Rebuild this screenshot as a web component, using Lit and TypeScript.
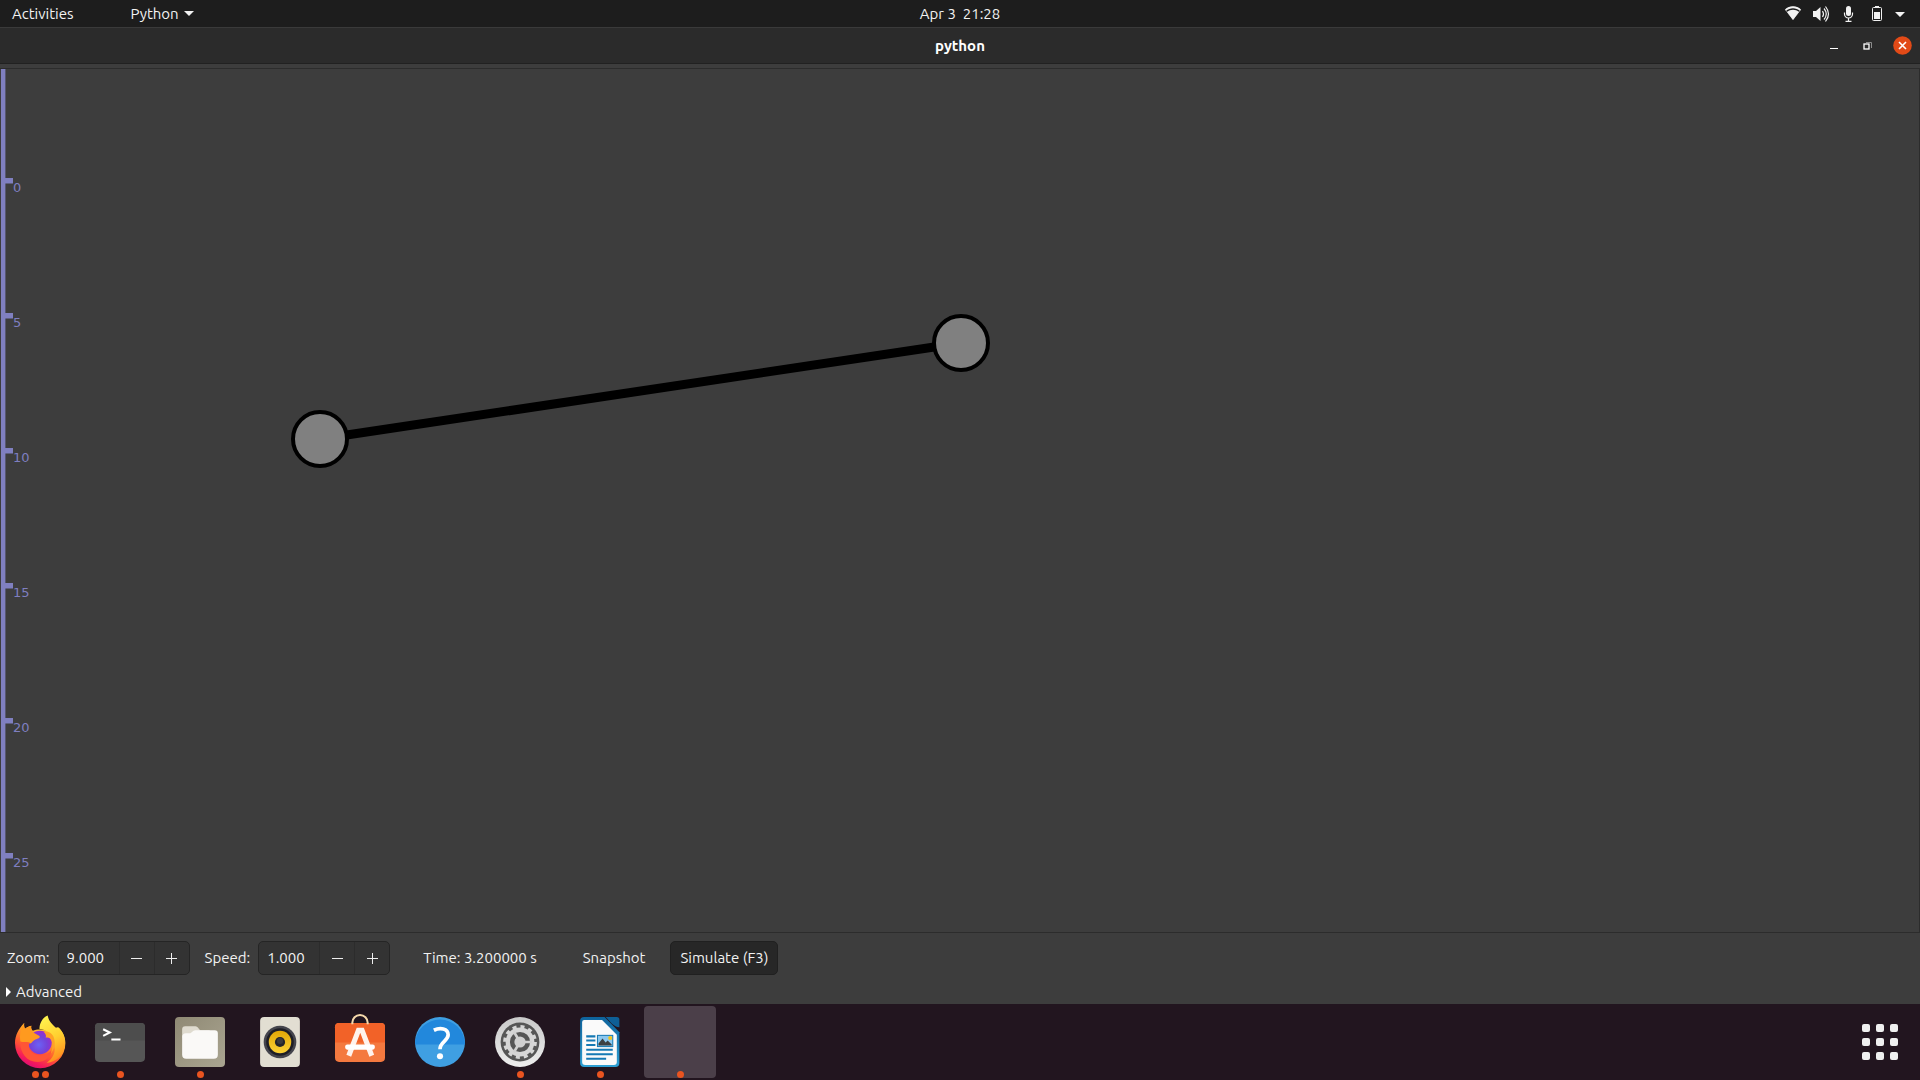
import { LitElement, html, svg, css } from "lit";
import { customElement, property } from "lit/decorators.js";

const UNIT = 27;
const ORIGIN = 113;
const TICKS = [0, 5, 10, 15, 20, 25];

const firefox = svg`
  <defs>
    <linearGradient id="ffBody" x1="0.8" y1="0.1" x2="0.3" y2="1">
      <stop offset="0" stop-color="#ffe23a"/><stop offset="0.3" stop-color="#ffa52a"/>
      <stop offset="0.6" stop-color="#ff5a30"/><stop offset="0.85" stop-color="#f5195c"/>
      <stop offset="1" stop-color="#d60d78"/>
    </linearGradient>
    <linearGradient id="ffFlame" x1="0.3" y1="0" x2="0.6" y2="1">
      <stop offset="0" stop-color="#fff34f"/><stop offset="0.5" stop-color="#ffd030"/><stop offset="1" stop-color="#ff8a1e"/>
    </linearGradient>
    <radialGradient id="ffGlobe" cx="0.45" cy="0.6" r="0.6">
      <stop offset="0" stop-color="#6b62f5"/><stop offset="0.6" stop-color="#7542d8"/><stop offset="1" stop-color="#9b2bcf"/>
    </radialGradient>
  </defs>
  <path fill="url(#ffBody)" d="M9 6c-.3 2.500 0 4 .8 5.500C11.500 10 13.500 9 16 8.500c-.5 2 0 3.500 1.500 5C21 12 26 12 30 13l12-3c4 3 7.400 8.500 7.400 15.500A24.600 24.600 0 0 1 0 25.500C0 18 4 11 9 6z"/>
  <path fill="url(#ffFlame)" d="M32-1.500c1 5.500 4 8 7.500 11.500 1.300 1.300 2.400 2.400 3 3.700.3-1.500.2-2.700-.1-4 4.500 4.500 7 10 6.600 17C48.500 37 41 44 31 45c7-5 9-11 7.500-17C37.500 21 34 15.500 29 13c-1.500-.8-3.500-1-5-1 0-6 3-11.500 8-13.500z"/>
  <circle cx="24.500" cy="25" r="11.500" fill="url(#ffGlobe)"/>
  <path fill="#ff9a1f" d="M9 6c-.3 2.500 0 4 .8 5.500C11.500 10 13.500 9 16 8.500c-.5 2 0 4 1.500 6.500l6.500 3.500c1 2-1.500 2.500-4 3.500-2.500 1-3 3-5 4-3-.8-6 0-9 1.500C4 20 4.500 12 9 6z"/>
  <path fill="#ff5536" d="M5 24c3 1 6 0 9.500 1-2.500 4-.5 8 3.500 10.500 6 3.500 13 2.500 18-3-1 7-7 11.500-14 11.500C12 44 5 36 5 24z"/>
  <path fill="#ffa326" d="M28 14.500c4-1.500 9 1.500 10 5.500 2 6 1 11-3 16 2.500-6 2-12 0-14-1-2-3-2-5-2 1-1 0-4-2-5.500z"/>`;

const terminal = svg`
  <rect x="0" y="6" width="49" height="38" rx="4" fill="#565656"/>
  <path d="M0 23V10a4 4 0 0 1 4-4h41a4 4 0 0 1 4 4v13z" fill="#4d4d4d"/>
  <path d="M8 12l6.500 3.200L8 18.500M16 22h9" fill="none" stroke="#fff" stroke-width="2"/>`;

const files = svg`
  <defs><linearGradient id="fl" x1="0" y1="0" x2="1" y2="1"><stop offset="0" stop-color="#8f8974"/><stop offset="1" stop-color="#aaa591"/></linearGradient></defs>
  <rect width="49" height="49" rx="4" fill="url(#fl)"/>
  <path d="M7 20v-8a3 3 0 0 1 3-3h10c3 0 3 4 6 4h8v7z" fill="#dfdbcf"/>
  <path d="M11 16h3c3 0 3-3 6-3h19a3 3 0 0 1 3 3v21a4 4 0 0 1-4 4H11a4 4 0 0 1-4-4V20a4 4 0 0 1 4-4z" fill="#faf9f7"/>`;

const rhythmbox = svg`
  <defs><linearGradient id="rb" x1="0" y1="0" x2="0" y2="1"><stop offset="0" stop-color="#e3a806"/><stop offset="1" stop-color="#fbd135"/></linearGradient></defs>
  <rect x="5" width="39" height="49" rx="4" fill="#e2ded2"/>
  <circle cx="24.500" cy="24.500" r="16" fill="#45454d"/>
  <circle cx="24.500" cy="24.500" r="13.500" fill="#1e1e26"/>
  <circle cx="24.500" cy="24.500" r="11" fill="url(#rb)"/>
  <circle cx="24.500" cy="24.500" r="5" fill="#25252a"/>
  <circle cx="24.500" cy="23.500" r="3" fill="#3a3a3e"/>`;

const software = svg`
  <rect x="0" y="6" width="49" height="38" rx="4" fill="#f4793f"/>
  <path d="M0 25V10a4 4 0 0 1 4-4h41a4 4 0 0 1 4 4v15z" fill="#f26228"/>
  <path d="M17 7V5.500a7.500 7.500 0 0 1 15 0V7" fill="none" stroke="#f6d9ab" stroke-width="2"/>
  <path d="M13.500 38L23 13h3.500L36 38" fill="none" stroke="#fff2ec" stroke-width="5"/>
  <rect x="10" y="27" width="29" height="5" rx="2" fill="#fff"/>`;

const help = svg`
  <circle cx="24.500" cy="24.500" r="24.500" fill="#3f9fe2"/>
  <path d="M0 27a24.500 24.500 0 1 1 49 0z" fill="#2288dc"/>
  <path d="M18.500 13c6-3 14-2 14 4.500 0 6-8 7-8 14" fill="none" stroke="#fff" stroke-width="3.600"/>
  <circle cx="24.500" cy="38.500" r="3" fill="#fff"/>`;

const settings = svg`
  <defs><linearGradient id="st" x1="0" y1="0" x2="0" y2="1"><stop offset="0" stop-color="#c9c9c9"/><stop offset="1" stop-color="#eeeeee"/></linearGradient></defs>
  <circle cx="24.500" cy="24.500" r="24.500" fill="url(#st)"/>
  <circle cx="24.500" cy="24.500" r="19" fill="#565656"/>
  <circle cx="24.500" cy="24.500" r="14.800" fill="none" stroke="#d6d6d6" stroke-width="3.500" stroke-dasharray="3.900 3.850"/>
  <circle cx="24.500" cy="24.500" r="12" fill="none" stroke="#d6d6d6" stroke-width="4.200"/>
  <circle cx="24.500" cy="24.500" r="5.500" fill="#d0d0d0"/>
  <path d="M24.500 24.500H36M24.500 24.500L18.500 14.500M24.500 24.500L18.500 34.500" stroke="#d0d0d0" stroke-width="2.600"/>`;

const writer = svg`
  <defs><linearGradient id="wr" x1="0" y1="0" x2="0" y2="1"><stop offset="0" stop-color="#0e639c"/><stop offset="1" stop-color="#2ea0d4"/></linearGradient></defs>
  <path d="M9 0h20L43.500 15v30a4 4 0 0 1-4 4H9a4 4 0 0 1-4-4V4a4 4 0 0 1 4-4z" fill="url(#wr)"/>
  <path d="M9 3h17.500L41 17.500V44a3 3 0 0 1-3 3H10a3 3 0 0 1-3-3V5a2 2 0 0 1 2-2z" fill="#fafafa"/>
  <path d="M30 0h11a2.500 2.500 0 0 1 2.500 2.500V10C38 10 34 4 30 0z" fill="#0e5f96"/>
  <path d="M11 19h9M11 23h9M11 27.500h9M11 32h26M11 36.500h26M11 41h19.500" stroke="#1579b4" stroke-width="2"/>
  <rect x="22" y="18" width="15" height="11" fill="#8cc8ee" stroke="#1579b4"/>
  <path d="M23 28v-2l4-5 3 4 2-2 4 4v1z" fill="#3c4043"/>
  <circle cx="34.500" cy="20.500" r="2" fill="#f4c51b"/>`;

const DOCK = [
  { name: "Firefox", art: firefox, windows: 2 },
  { name: "Terminal", art: terminal, windows: 1 },
  { name: "Files", art: files, windows: 1 },
  { name: "Rhythmbox", art: rhythmbox, windows: 0 },
  { name: "Ubuntu Software", art: software, windows: 0 },
  { name: "Help", art: help, windows: 0 },
  { name: "Settings", art: settings, windows: 1 },
  { name: "LibreOffice Writer", art: writer, windows: 1 },
  { name: "python", art: null, windows: 1, active: true },
];

@customElement("system-bar")
class SystemBar extends LitElement {
  static styles = css`
    :host { display: grid; grid-template-columns: 1fr auto 1fr; align-items: center; height: 27px; background: #1d1d1d; color: #f2f2f2; }
    .side { display: flex; align-items: center; gap: 57px; padding-left: 12px; }
    button { all: unset; display: flex; align-items: center; gap: 5px; }
    .status { display: flex; justify-content: flex-end; padding-right: 14px; }
    .status button { gap: 0; }
    .clock { white-space: pre; }
  `;
  render() {
    return html`
      <nav class="side">
        <button>Activities</button>
        <button>Python
          <svg width="10" height="5" viewBox="0 0 10 5" aria-hidden="true"><path d="M0 0h10L5 5z" fill="#f2f2f2"/></svg>
        </button>
      </nav>
      <button class="clock">Apr 3  21:28</button>
      <div class="status">
        <button aria-label="System menu">
          <svg width="122" height="20" viewBox="0 0 122 20" fill="#f2f2f2">
            <path d="M1.500 5.800C5.500 2 12.500 2 16.500 5.800L9 15.500z" fill="none" stroke="#8a8a8a" stroke-width="1"/>
            <path d="M1 5.500C5.500 1.300 12.500 1.300 17 5.500l-1 1.200C12 3.300 6 3.300 2 6.700z"/>
            <path d="M3 8c3.500-3 8.500-3 12 0l-6 8z"/>
            <path d="M29 7h3l4.500-4v14L32 13h-3z"/>
            <path d="M38.500 7q2 3 0 6M40 4.500q4.500 5.500 0 11M41.500 2.500q6 7.500 0 15" fill="none" stroke="#f2f2f2" stroke-width="1.200"/>
            <rect x="62" y="2" width="5" height="10" rx="2.500"/>
            <path d="M60.500 8.500v1.500a4 4 0 0 0 8 0V8.500M64.500 14v3M61.500 17.300h6" fill="none" stroke="#f2f2f2" stroke-width="1.200"/>
            <path d="M91 2h4v2h-4z"/>
            <rect x="88.500" y="3.500" width="9" height="13" rx="1" fill="none" stroke="#f2f2f2"/>
            <path d="M90 8h6v7h-6zM111 8h10l-5 5z"/>
          </svg>
        </button>
      </div>`;
  }
}

@customElement("title-bar")
class TitleBar extends LitElement {
  static styles = css`
    :host { display: grid; grid-template-columns: 1fr auto 1fr; align-items: center; height: 35px; background: #2b2b2b; border-top: 1px solid #3a3a3a; border-bottom: 1px solid #212121; color: #fff; }
    h1 { margin: 0; font-size: 15px; font-weight: 700; grid-column: 2; }
    .buttons { display: flex; align-items: center; justify-content: flex-end; gap: 16px; padding-right: 8px; }
    button { all: unset; display: flex; }
  `;
  render() {
    return html`
      <h1>python</h1>
      <div class="buttons">
        <button aria-label="Minimize"><svg width="18" height="18"><path d="M5 11.500h8" stroke="#fff"/></svg></button>
        <button aria-label="Restore"><svg width="18" height="18" fill="none"><path d="M7 5.500h5.500V11" stroke="#8c8c8c"/><rect x="5" y="7" width="5" height="5" stroke="#fff" stroke-width="1.300"/></svg></button>
        <button aria-label="Close"><svg width="19" height="19"><circle cx="9.500" cy="9.500" r="9.300" fill="#e24a17"/><path d="M6 6l7 7M13 6l-7 7" stroke="#fff" stroke-width="1.600"/></svg></button>
      </div>`;
  }
}

@customElement("plot-canvas")
class PlotCanvas extends LitElement {
  static styles = css`
    :host { display: block; border: 1px solid #2c2c2c; border-left-width: 0; overflow: hidden; }
    svg { display: block; width: 100%; height: 100%; }
    .label { font: 13px "DejaVu Sans", sans-serif; fill: #7f7fc0; }
  `;
  render() {
    return html`<svg role="img" aria-label="Two connected nodes with a vertical ruler">
      <rect x="1" y="0" width="4.400" height="100%" fill="#8080c0"/>
      ${TICKS.map((t) => svg`
        <rect x="5" y=${ORIGIN + t * UNIT - 4} width="8" height="5.500" fill="#8080c0"/>
        <text class="label" x="13" y=${ORIGIN + t * UNIT + 10}>${t}</text>`)}
      <path d="M320 370L961 274" stroke="#000" stroke-width="9"/>
      <g fill="#808080" stroke="#000" stroke-width="4">
        <circle cx="320" cy="370" r="27"/>
        <circle cx="961" cy="274" r="27"/>
      </g>
    </svg>`;
  }
}

@customElement("spin-field")
class SpinField extends LitElement {
  @property() label = "";
  @property() value = "";
  static styles = css`
    :host { display: flex; align-items: center; gap: 8px; }
    .box { display: flex; box-sizing: border-box; height: 34px; border: 1px solid #252525; border-radius: 5px; background: #333; overflow: hidden; }
    input { all: unset; width: 52px; padding-left: 8px; }
    button { all: unset; display: grid; place-items: center; width: 34px; border-left: 1px solid #2c2c2c; }
    path { stroke: #eee; }
  `;
  render() {
    return html`
      <label for="value">${this.label}</label>
      <div class="box">
        <input id="value" .value=${this.value}>
        <button aria-label="Decrease"><svg width="11" height="11"><path d="M0 5.500h11"/></svg></button>
        <button aria-label="Increase"><svg width="11" height="11"><path d="M0 5.500h11M5.500 0v11"/></svg></button>
      </div>`;
  }
}

@customElement("control-panel")
class ControlPanel extends LitElement {
  static styles = css`
    :host { display: block; padding-bottom: 2px; }
    .row { display: flex; align-items: center; padding: 8px 7px 6px; }
    .fields { display: flex; gap: 15px; }
    .time { margin-left: 33px; }
    button { all: unset; box-sizing: border-box; height: 34px; line-height: 32px; padding: 0 9px; border: 1px solid transparent; border-radius: 5px; }
    .snapshot { margin-left: 36px; }
    .simulate { margin-left: 15px; border-color: #202020; background: #272727; }
    .advanced { all: unset; display: flex; align-items: center; gap: 5px; height: 21px; padding-left: 6px; }
  `;
  render() {
    return html`
      <div class="row">
        <div class="fields">
          <spin-field label="Zoom:" value="9.000"></spin-field>
          <spin-field label="Speed:" value="1.000"></spin-field>
        </div>
        <span class="time">Time: 3.200000 s</span>
        <button class="snapshot">Snapshot</button>
        <button class="simulate">Simulate (F3)</button>
      </div>
      <button class="advanced" aria-expanded="false">
        <svg width="5" height="10" aria-hidden="true"><path d="M0 0l5 5-5 5z" fill="#fff"/></svg>Advanced
      </button>`;
  }
}

@customElement("app-dock")
class AppDock extends LitElement {
  static styles = css`
    :host { display: flex; justify-content: space-between; align-items: center; height: 76px; background: #22151f; }
    .apps { display: flex; gap: 8px; padding-left: 4px; }
    button { all: unset; position: relative; display: grid; place-items: center; width: 72px; height: 72px; border-radius: 4px; }
    .active { background: #4b3f49; }
    .icon { overflow: visible; }
    .dots { position: absolute; bottom: 0; left: 0; right: 0; display: flex; justify-content: center; gap: 3px; }
    .dots i { width: 7px; height: 7px; border-radius: 50%; background: #e95420; }
    .grid { margin-right: 4px; }
  `;
  render() {
    return html`
      <nav class="apps">
        ${DOCK.map((app) => html`
          <button class=${app.active ? "active" : ""} aria-label=${app.name}>
            <svg class="icon" width="50" height="50" viewBox="0 0 49 49">${app.art}</svg>
            <span class="dots">${Array.from({ length: app.windows }, () => html`<i></i>`)}</span>
          </button>`)}
      </nav>
      <button class="grid" aria-label="Show Applications">
        <svg width="36" height="36" fill="#f0f0f0">
          ${[0, 14, 28].map((y) => [0, 14, 28].map((x) => svg`<rect x=${x} y=${y} width="8" height="8" rx="2"/>`))}
        </svg>
      </button>`;
  }
}

@customElement("app-root")
class AppRoot extends LitElement {
  static styles = css`
    :host { display: flex; flex-direction: column; height: 100vh; overflow: hidden; background: #3d3d3d; color: #f2f2f2; font: 15px/20px Ubuntu, "Noto Sans", sans-serif; }
    plot-canvas { flex: 1; min-height: 0; margin-top: 4px; }
  `;
  render() {
    return html`
      <system-bar></system-bar>
      <title-bar></title-bar>
      <plot-canvas></plot-canvas>
      <control-panel></control-panel>
      <app-dock></app-dock>`;
  }
}
